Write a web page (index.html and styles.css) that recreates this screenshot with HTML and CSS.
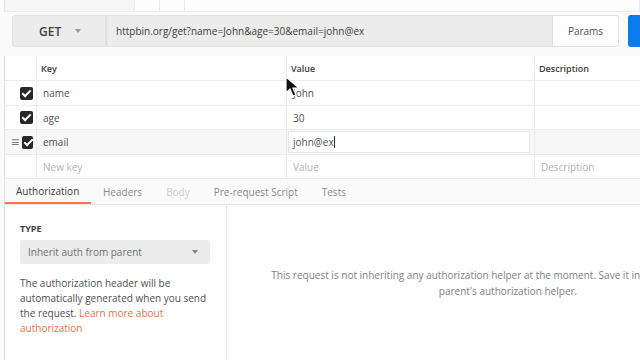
FILE: index.html
```html
<!DOCTYPE html>
<html lang="en">

<head>
    <meta charset="UTF-8" />
    <meta name="viewport" content="width=device-width, initial-scale=1.0" />
    <title>Request - Params</title>
    <link rel="stylesheet" href="styles.css">
</head>

<body>

    <div class="page">

        <div class="topStrip">
            <div class="stripTab wide"></div>
            <div class="stripTab"></div>
            <div class="stripTab"></div>
            <div class="stripTab grow"></div>
        </div>

        <div class="urlBar">
            <div class="method">GET <span class="caret"></span></div>
            <div class="url">httpbin.org/get?name=John&amp;age=30&amp;email=john@ex</div>
            <div class="params">Params</div>
            <div class="send"></div>
        </div>

        <div class="panel">

            <div class="paramTable">
                <div class="row head">
                    <div class="cell check"></div>
                    <div class="cell">Key</div>
                    <div class="cell">Value</div>
                    <div class="cell">Description</div>
                </div>
                <div class="row">
                    <div class="cell check"><span class="box"></span></div>
                    <div class="cell">name</div>
                    <div class="cell">John</div>
                    <div class="cell"></div>
                </div>
                <div class="row short">
                    <div class="cell check"><span class="box"></span></div>
                    <div class="cell">age</div>
                    <div class="cell">30</div>
                    <div class="cell"></div>
                </div>
                <div class="row active">
                    <div class="cell check"><span class="handle">&#8801;</span><span class="box"></span></div>
                    <div class="cell">email</div>
                    <div class="cell"><div class="editing">john@ex<span class="caretLine"></span></div></div>
                    <div class="cell"></div>
                </div>
                <div class="row short placeholder">
                    <div class="cell check"></div>
                    <div class="cell">New key</div>
                    <div class="cell">Value</div>
                    <div class="cell">Description</div>
                </div>
            </div>

            <div class="tabs">
                <div class="tab selected">Authorization</div>
                <div class="tab">Headers</div>
                <div class="tab disabled">Body</div>
                <div class="tab">Pre-request Script</div>
                <div class="tab">Tests</div>
            </div>

            <div class="authArea">
                <div class="authLeft">
                    <div class="label">TYPE</div>
                    <div class="select">Inherit auth from parent <span class="caret"></span></div>
                    <p class="help">The authorization header will be automatically generated when you send
                        the request. <a href="#">Learn more about authorization</a></p>
                </div>
                <div class="authRight">
                    <p class="message">This request is not inheriting any authorization helper at the moment. Save it in a collection to use the<br>
                        parent's authorization helper.</p>
                </div>
            </div>

        </div>

        <svg class="pointer" width="16" height="22" viewBox="0 0 16 22">
            <path d="M1 1 L1 17 L5 13 L8 20 L11 19 L8 12 L14 12 Z" fill="#111" stroke="#fff" stroke-width="1.2" />
        </svg>
    </div>

</body>

</html>
```

FILE: styles.css
```css
* {
    margin: 0;
    padding: 0;
    box-sizing: border-box;
}

html,
body {
    width: 640px;
    height: 360px;
    overflow: hidden;
    background-color: #fafafa;
    font-family: "Open Sans", "Noto Sans", sans-serif;
    font-size: 10px;
    color: #505050;
}

.page {
    position: relative;
    width: 640px;
    height: 360px;
    overflow: hidden;
}

/* strip of tabs at the very top */

.topStrip {
    display: flex;
    height: 12px;
    margin-left: 4px;
    border-left: 1px solid #e4e4e4;
    border-bottom: 1px solid #ececec;
}

.stripTab {
    width: 25px;
    border-right: 1px solid #ececec;
    background-color: #fdfdfd;
}

.stripTab.wide {
    width: 130px;
    background-color: #f6f6f6;
}

.stripTab.grow {
    flex: 1;
}

/* url bar */

.urlBar {
    display: flex;
    width: 680px;
    height: 32px;
    margin-top: 3px;
    padding-left: 12px;
}

.method {
    display: flex;
    align-items: center;
    flex-shrink: 0;
    width: 94px;
    padding-left: 26px;
    font-size: 12px;
    font-weight: 600;
    color: #404040;
    background-color: #ececec;
    border: 1px solid #e2e2e2;
    border-radius: 3px 0 0 3px;
}

.caret {
    display: inline-block;
    width: 0;
    height: 0;
    margin-left: 14px;
    border-left: 3px solid transparent;
    border-right: 3px solid transparent;
    border-top: 4px solid #9a9a9a;
}

.url {
    display: flex;
    align-items: center;
    flex-shrink: 0;
    width: 447px;
    padding-left: 9px;
    background-color: #ececec;
    border: 1px solid #e2e2e2;
    border-left: 1px solid #dcdcdc;
    color: #404040;
}

.params {
    display: flex;
    align-items: center;
    justify-content: center;
    flex-shrink: 0;
    width: 66px;
    background-color: #fff;
    border: 1px solid #e2e2e2;
    border-left: none;
    border-radius: 0 3px 3px 0;
    color: #505050;
}

.send {
    flex-shrink: 0;
    width: 40px;
    margin-left: 9px;
    background-color: #097bed;
    border-radius: 3px 0 0 3px;
}

/* main panel */

.panel {
    margin-left: 4px;
    margin-top: 9px;
    border-left: 1px solid #e2e2e2;
}

.paramTable {
    background-color: #fff;
}

.row {
    display: grid;
    grid-template-columns: 32px 250px 248px 1fr;
    height: 25px;
    border-bottom: 1px solid #ececec;
}

.row.short {
    height: 24px;
}

.row.head {
    font-size: 9px;
    font-weight: 600;
    color: #3c3c3c;
    background-color: #fff;
}

.cell {
    display: flex;
    align-items: center;
    padding-left: 6px;
    border-right: 1px solid #ececec;
}

.row .cell:last-child {
    border-right: none;
}

.row.head .cell {
    padding-left: 4px;
}

.cell.check {
    justify-content: flex-end;
    padding-right: 3px;
}

.box {
    position: relative;
    display: inline-block;
    width: 13px;
    height: 13px;
    border-radius: 2px;
    background-color: #282828;
}

.box::after {
    content: "";
    position: absolute;
    left: 4px;
    top: 1px;
    width: 3px;
    height: 7px;
    border-right: 2px solid #fff;
    border-bottom: 2px solid #fff;
    transform: rotate(45deg);
}

.handle {
    margin-right: 3px;
    font-size: 14px;
    color: #777;
    line-height: 1;
}

.row.active {
    background-color: #f7f7f7;
}

.row.active .cell:nth-child(3) {
    padding: 1px 4px 1px 1px;
}

.editing {
    display: flex;
    align-items: center;
    width: 100%;
    height: 100%;
    padding-left: 4px;
    background-color: #fff;
    border: 1px solid #e6e6e6;
}

.caretLine {
    display: inline-block;
    width: 1px;
    height: 12px;
    background-color: #333;
}

.row.placeholder {
    color: #b4b4b4;
}

/* tabs */

.tabs {
    display: flex;
    height: 26px;
    border-bottom: 1px solid #e6e6e6;
    background-color: #fafafa;
}

.tab {
    display: flex;
    align-items: center;
    padding: 0 12px;
    color: #8a8a8a;
}

.tab.selected {
    width: 86px;
    padding-left: 11px;
    color: #404040;
    border-bottom: 2px solid #f0784a;
}

.tab.disabled {
    color: #cfcfcf;
}

/* auth section */

.authArea {
    display: flex;
    height: 160px;
}

.authLeft {
    width: 224px;
    padding: 17px 16px 0 15px;
    background-color: #fff;
    border-right: 1px solid #e6e6e6;
}

.label {
    font-size: 9px;
    font-weight: 700;
    color: #3c3c3c;
}

.select {
    display: flex;
    align-items: center;
    justify-content: space-between;
    width: 190px;
    height: 24px;
    margin-top: 5px;
    padding: 0 12px 0 8px;
    background-color: #ececec;
    border-radius: 2px;
    color: #707070;
}

.select .caret {
    border-top-color: #8a8a8a;
}

.help {
    margin-top: 12px;
    line-height: 15px;
    color: #505050;
}

.help a {
    color: #e0763f;
    text-decoration: none;
}

.authRight {
    width: 562px;
    flex-shrink: 0;
    padding-top: 62px;
    background-color: #fff;
}

.message {
    line-height: 16px;
    text-align: center;
    color: #808080;
}

.pointer {
    position: absolute;
    left: 285px;
    top: 76px;
}
```
